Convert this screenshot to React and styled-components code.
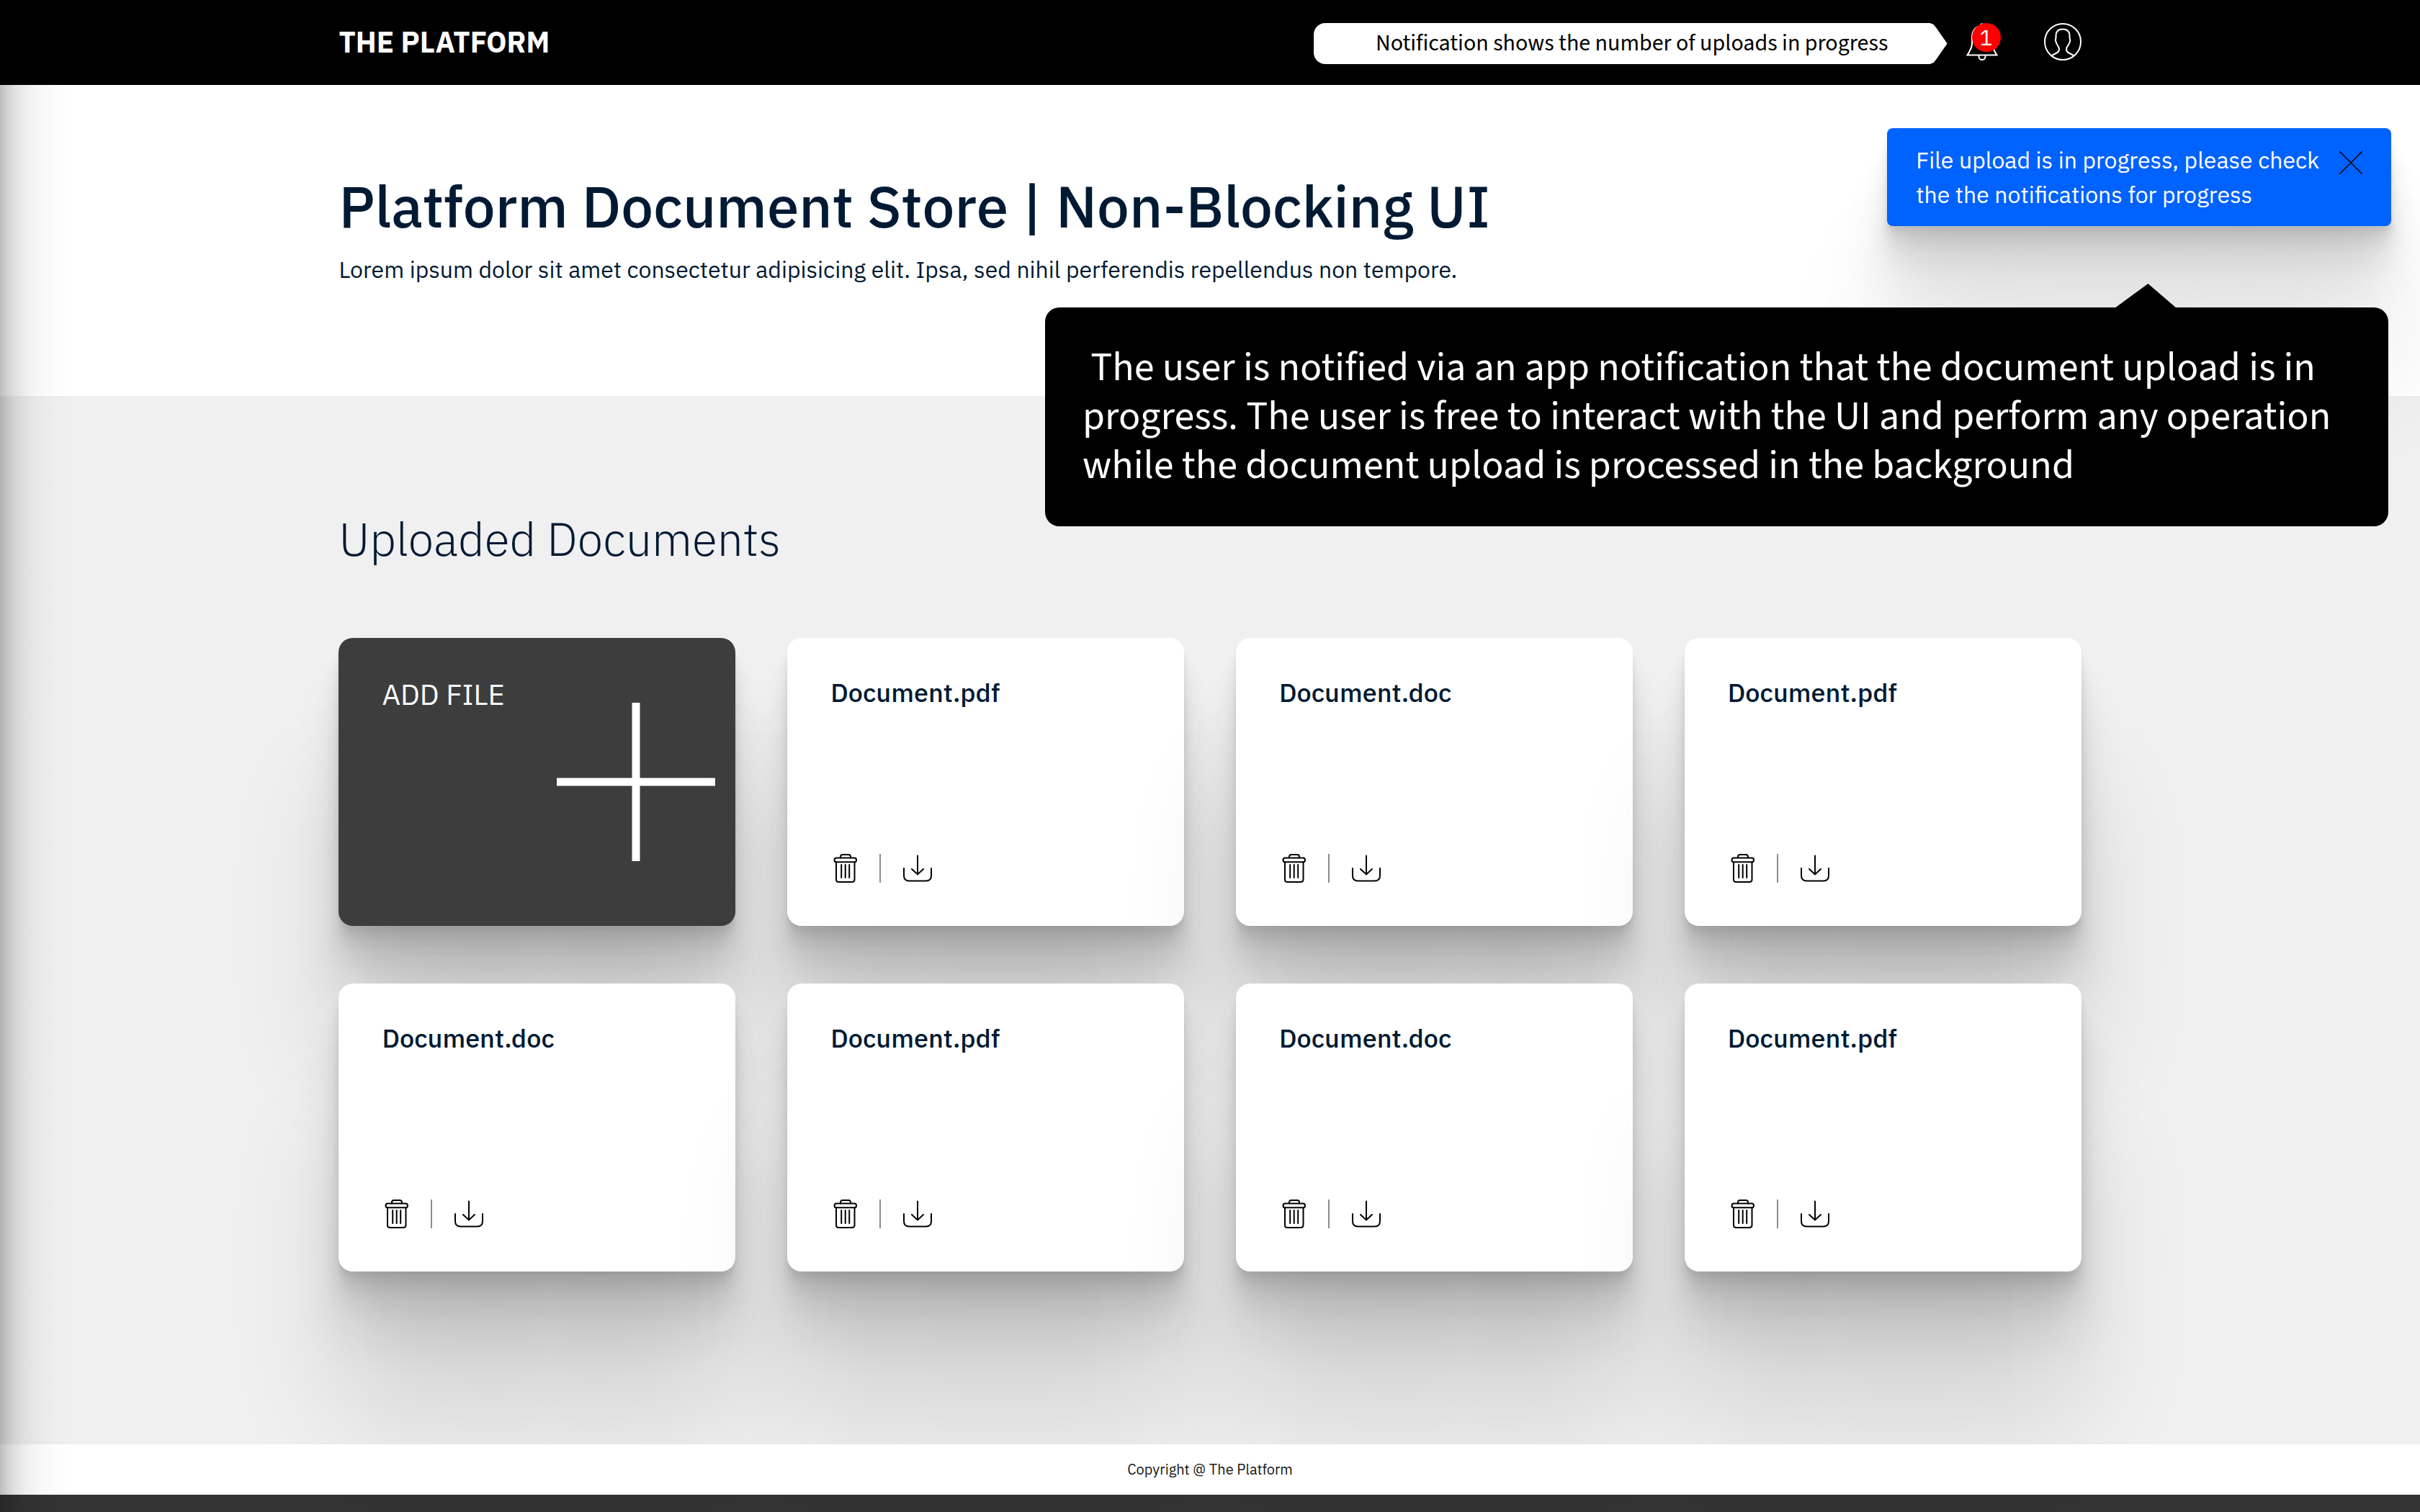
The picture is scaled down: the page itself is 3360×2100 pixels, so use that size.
import React from "react";
import styled, { createGlobalStyle } from "styled-components";

const ink = "#001a33";
const sans = '"IBM Plex Sans", Inter, "Liberation Sans", sans-serif';
const note = '"Myriad Pro", "Source Sans 3", "Source Sans Pro", "Open Sans", sans-serif';
const deep =
  "0 6px 4px rgba(0,0,0,0.034), 0 13px 11px rgba(0,0,0,0.048), 0 25px 20px rgba(0,0,0,0.06), 0 45px 36px rgba(0,0,0,0.072), 0 84px 67px rgba(0,0,0,0.086), 0 200px 160px rgba(0,0,0,0.12)";

const GlobalStyle = createGlobalStyle`
  *, *::before, *::after { box-sizing: border-box; }
  html, body, #root { height: 100%; }
  body { margin: 0; background: #333; color: ${ink}; font-family: ${sans}; overflow-x: hidden; }
  h1, h2, h3, p, ul { margin: 0; padding: 0; }
`;

const Page = styled.div`
  position: relative;
  min-height: 100%;
  display: flex;
  flex-direction: column;
  overflow: hidden;
`;

const EdgeShade = styled.div`
  position: absolute;
  z-index: 3;
  top: 0;
  bottom: 0;
  left: 0;
  width: 100px;
  background: linear-gradient(
    90deg,
    rgba(0, 0, 0, 0.26) 0,
    rgba(0, 0, 0, 0.18) 10px,
    rgba(0, 0, 0, 0.12) 20px,
    rgba(0, 0, 0, 0.07) 34px,
    rgba(0, 0, 0, 0.035) 50px,
    rgba(0, 0, 0, 0.012) 74px,
    rgba(0, 0, 0, 0) 100px
  );
  pointer-events: none;
`;

const Header = styled.header`
  display: flex;
  align-items: flex-start;
  justify-content: space-between;
  height: 118px;
  padding: 32px 14% 0;
  background: #000;
  color: #fff;
`;

const Brand = styled.a`
  font-size: 40px;
  line-height: 52px;
  font-weight: 700;
  color: #fff;
  text-decoration: none;
`;

const Tools = styled.div`
  display: flex;
  align-items: flex-start;
`;

const Hint = styled.p`
  width: 880px;
  margin-right: 26px;
  padding-left: 4px;
  font-family: ${note};
  font-size: 32px;
  line-height: 57px;
  text-align: center;
  color: #000;
  background: #fff;
  border-radius: 16px 0 0 16px;
  clip-path: polygon(
    0 0,
    calc(100% - 24px) 0,
    calc(100% - 19px) 2px,
    calc(100% - 15px) 7px,
    100% 50%,
    calc(100% - 15px) 50px,
    calc(100% - 19px) 55px,
    calc(100% - 24px) 100%,
    0 100%
  );
`;

const IconButton = styled.button`
  position: relative;
  display: flex;
  margin: 0 0 0 ${(p) => p.$gap || 0}px;
  padding: 0;
  border: 0;
  background: none;
  font: inherit;
  color: inherit;
  cursor: pointer;
`;

const Count = styled.span`
  position: absolute;
  top: 0;
  left: 8px;
  width: 40px;
  height: 40px;
  border-radius: 50%;
  background: #f00;
  color: #fff;
  font-size: 30px;
  line-height: 40px;
  text-align: center;
`;

const Hero = styled.section`
  position: relative;
  height: 432px;
  padding: 122px 14% 0;
  background: #fff;
`;

const Title = styled.h1`
  font-size: 80px;
  line-height: 92px;
  font-weight: 500;
`;

const Lead = styled.p`
  margin-top: 22px;
  font-size: 32px;
  line-height: 40px;
`;

const Toast = styled.div`
  position: absolute;
  z-index: 1;
  top: 60px;
  right: 40px;
  display: flex;
  gap: 28px;
  align-items: flex-start;
  padding: 20px 40px;
  border-radius: 8px;
  background: #0062ff;
  color: #fff;
  font-size: 32px;
  line-height: 48px;
  box-shadow: ${deep};
`;

const Close = styled(IconButton)`
  margin-top: 12px;
  color: #000;
`;

const Callout = styled.div`
  position: absolute;
  z-index: 2;
  top: 309px;
  right: 44px;
  width: 1865px;
  padding: 50px 52px;
  border-radius: 20px;
  background: #000;
  color: #fff;
  font-family: ${note};
  font-size: 56px;
  line-height: 68px;
  white-space: pre;

  &::before {
    content: "";
    position: absolute;
    top: -33px;
    right: 294px;
    width: 86px;
    height: 34px;
    background: #000;
    clip-path: polygon(0 100%, 54% 0, 100% 100%);
  }
`;

const Main = styled.main`
  flex: 1;
  padding: 152px 14% 240px;
  background: #f0f0f0;
`;

const SectionTitle = styled.h2`
  font-size: 64px;
  line-height: 92px;
  font-weight: 300;
`;

const Grid = styled.ul`
  display: grid;
  grid-template-columns: repeat(4, 1fr);
  gap: 80px 72px;
  margin-top: 92px;
  list-style: none;
`;

const Item = styled.li`
  display: flex;
`;

const Card = styled.article`
  flex: 1;
  display: flex;
  flex-direction: column;
  justify-content: space-between;
  height: 400px;
  padding: 54px 60px 60px;
  border-radius: 20px;
  background: #fff;
  box-shadow: ${deep};
`;

const AddCard = styled.button`
  flex: 1;
  display: flex;
  justify-content: space-between;
  align-items: flex-start;
  height: 400px;
  padding: 54px 28px 0 60px;
  border: 0;
  border-radius: 20px;
  background: #3d3d3d;
  color: #fff;
  font-family: inherit;
  font-size: 40px;
  line-height: 48px;
  cursor: pointer;
  box-shadow: ${deep};
`;

const PlusIcon = styled.svg`
  margin-top: 36px;
`;

const FileName = styled.h3`
  font-size: 36px;
  line-height: 44px;
  font-weight: 500;
`;

const Actions = styled.div`
  display: flex;
  align-items: center;
`;

const Rule = styled.span`
  width: 2px;
  height: 40px;
  margin: 0 30px 0 28px;
  background: #8d8d8d;
`;

const Footer = styled.footer`
  height: 70px;
  margin-bottom: 24px;
  font-size: 20px;
  line-height: 70px;
  text-align: center;
  color: #161616;
  background: #fff;
`;

const files = [
  "Document.pdf",
  "Document.doc",
  "Document.pdf",
  "Document.doc",
  "Document.pdf",
  "Document.doc",
  "Document.pdf",
];

const Trash = () => (
  <svg width="40" height="40" viewBox="0 0 40 40" fill="none" stroke="#000" strokeWidth="2" strokeLinecap="round">
    <path d="M14 5.500V4Q14 1 17 1h8Q28 1 28 4V5.500" />
    <rect x="5.500" y="5.500" width="30.500" height="5.800" rx="2.900" />
    <path d="M8 11.500V35.500Q8 39 11.500 39h18Q33.500 39 33.500 35.500V11.500M15.200 15v18M20.700 15v18M26.200 15v18" />
  </svg>
);

const Download = () => (
  <svg width="42" height="40" viewBox="0 0 42 40" fill="none" stroke="#000" strokeWidth="2" strokeLinecap="round">
    <path d="M21 2.500V28.500M13 21l8 7.500 8-7.500M2 20V30Q2 37.500 9.500 37.500H32.500Q40 37.500 40 30V20" />
  </svg>
);

const Bell = () => (
  <svg width="44" height="52" viewBox="0 0 44 52" fill="none" stroke="#fff" strokeWidth="2">
    <path d="M19.500 2.500Q22 0 24.500 2.500M22 4C12 4 8 12 8 20V30Q7 36 1.500 44.500H42.500Q37 36 36 30V20C36 12 32 4 22 4ZM17.500 44.500v2a4.500 4.500 0 0 0 9 0v-2" />
  </svg>
);

const User = () => (
  <svg width="52" height="52" viewBox="0 0 52 52" fill="none" stroke="#fff" strokeWidth="2">
    <circle cx="26" cy="26" r="25" />
    <path d="M10 45.500L17.500 41.500Q21 40 21 36.500C21 32 17.500 31 17 27Q15 24 16.500 20.500V17Q17 8.500 26 8.500T35.500 17V20.500Q37 24 35.500 27C34.500 31 31 32 31 36.500Q31 40 34.500 41.500L42 45.500" />
  </svg>
);

export default function App() {
  return (
    <Page>
      <GlobalStyle />
      <Header>
        <Brand href="#">THE PLATFORM</Brand>
        <Tools>
          <Hint>Notification shows the number of uploads in progress</Hint>
          <IconButton aria-label="Notifications">
            <Bell />
            <Count>1</Count>
          </IconButton>
          <IconButton $gap={64} aria-label="Account">
            <User />
          </IconButton>
        </Tools>
      </Header>
      <Hero>
        <Title>Platform Document Store | Non-Blocking UI</Title>
        <Lead>Lorem ipsum dolor sit amet consectetur adipisicing elit. Ipsa, sed nihil perferendis repellendus non tempore.</Lead>
        <Toast role="status">
          <p>
            File upload is in progress, please check
            <br />
            the the notifications for progress
          </p>
          <Close aria-label="Close">
            <svg width="32" height="32" viewBox="0 0 32 32" stroke="currentColor" strokeWidth="1.500">
              <path d="M0 0L32 32M32 0L0 32" />
            </svg>
          </Close>
        </Toast>
        <Callout>
          {" The user is notified via an app notification that the document upload is in\nprogress. The user is free to interact with the UI and perform any operation\nwhile the document upload is processed in the background"}
        </Callout>
      </Hero>
      <Main>
        <SectionTitle>Uploaded Documents</SectionTitle>
        <Grid>
          <Item>
            <AddCard>
              ADD FILE
              <PlusIcon width="220" height="220" viewBox="0 0 220 220" stroke="#fff" strokeWidth="11">
                <path d="M110 0V220M0 110H220" />
              </PlusIcon>
            </AddCard>
          </Item>
          {files.map((name, i) => (
            <Item key={i}>
              <Card>
                <FileName>{name}</FileName>
                <Actions>
                  <IconButton aria-label={"Delete " + name}>
                    <Trash />
                  </IconButton>
                  <Rule />
                  <IconButton aria-label={"Download " + name}>
                    <Download />
                  </IconButton>
                </Actions>
              </Card>
            </Item>
          ))}
        </Grid>
      </Main>
      <Footer>Copyright @ The Platform</Footer>
      <EdgeShade />
    </Page>
  );
}
